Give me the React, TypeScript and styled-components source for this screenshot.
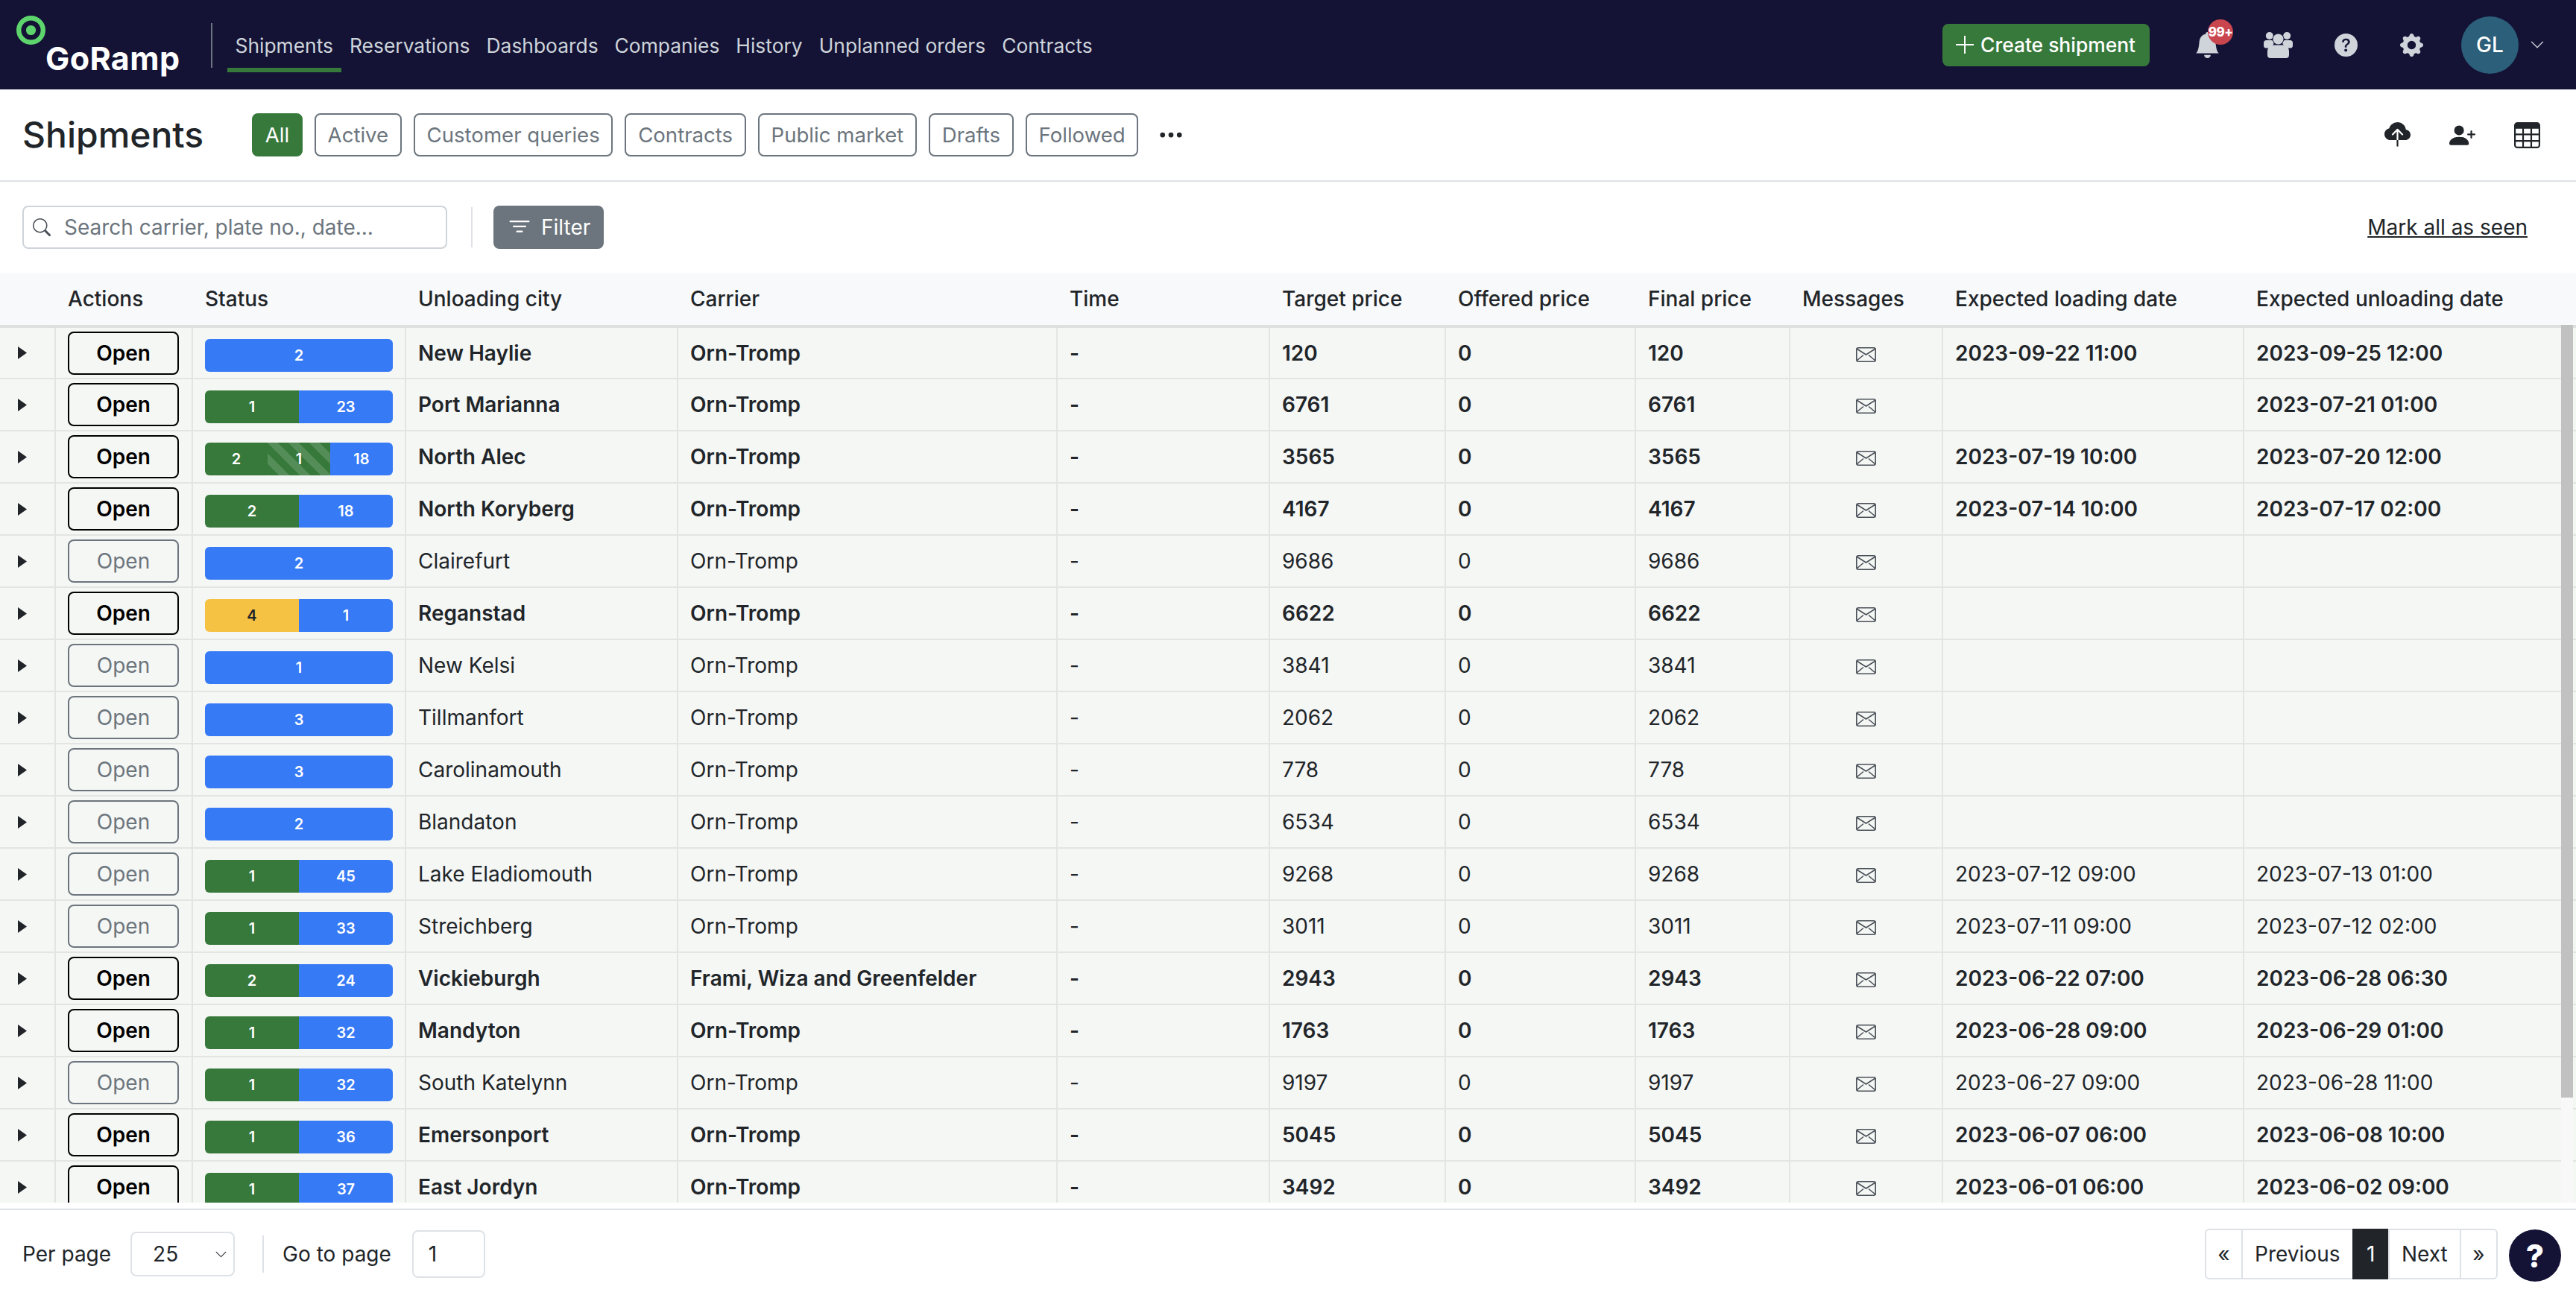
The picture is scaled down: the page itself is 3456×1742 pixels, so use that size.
import React from "react";
import styled, { createGlobalStyle } from "styled-components";
import {
  BsBellFill,
  BsChevronDown,
  BsCloudUploadFill,
  BsFilter,
  BsGearFill,
  BsPersonPlusFill,
  BsQuestionCircleFill,
  BsSearch,
  BsTable,
  BsThreeDots
} from "react-icons/bs";

type Segment = { kind: "green" | "striped" | "blue" | "yellow"; value: number };
type Shipment = {
  city: string;
  carrier?: string;
  unread: boolean;
  status: Segment[];
  target: number;
  loading?: string;
  unloading?: string;
};

const green = (value: number): Segment => ({ kind: "green", value });
const blue = (value: number): Segment => ({ kind: "blue", value });
const striped = (value: number): Segment => ({ kind: "striped", value });
const yellow = (value: number): Segment => ({ kind: "yellow", value });

const shipments: Shipment[] = [
  { city: "New Haylie", unread: true, status: [blue(2)], target: 120, loading: "2023-09-22 11:00", unloading: "2023-09-25 12:00" },
  { city: "Port Marianna", unread: true, status: [green(1), blue(23)], target: 6761, unloading: "2023-07-21 01:00" },
  { city: "North Alec", unread: true, status: [green(2), striped(1), blue(18)], target: 3565, loading: "2023-07-19 10:00", unloading: "2023-07-20 12:00" },
  { city: "North Koryberg", unread: true, status: [green(2), blue(18)], target: 4167, loading: "2023-07-14 10:00", unloading: "2023-07-17 02:00" },
  { city: "Clairefurt", unread: false, status: [blue(2)], target: 9686 },
  { city: "Reganstad", unread: true, status: [yellow(4), blue(1)], target: 6622 },
  { city: "New Kelsi", unread: false, status: [blue(1)], target: 3841 },
  { city: "Tillmanfort", unread: false, status: [blue(3)], target: 2062 },
  { city: "Carolinamouth", unread: false, status: [blue(3)], target: 778 },
  { city: "Blandaton", unread: false, status: [blue(2)], target: 6534 },
  { city: "Lake Eladiomouth", unread: false, status: [green(1), blue(45)], target: 9268, loading: "2023-07-12 09:00", unloading: "2023-07-13 01:00" },
  { city: "Streichberg", unread: false, status: [green(1), blue(33)], target: 3011, loading: "2023-07-11 09:00", unloading: "2023-07-12 02:00" },
  { city: "Vickieburgh", carrier: "Frami, Wiza and Greenfelder", unread: true, status: [green(2), blue(24)], target: 2943, loading: "2023-06-22 07:00", unloading: "2023-06-28 06:30" },
  { city: "Mandyton", unread: true, status: [green(1), blue(32)], target: 1763, loading: "2023-06-28 09:00", unloading: "2023-06-29 01:00" },
  { city: "South Katelynn", unread: false, status: [green(1), blue(32)], target: 9197, loading: "2023-06-27 09:00", unloading: "2023-06-28 11:00" },
  { city: "Emersonport", unread: true, status: [green(1), blue(36)], target: 5045, loading: "2023-06-07 06:00", unloading: "2023-06-08 10:00" },
  { city: "East Jordyn", unread: true, status: [green(1), blue(37)], target: 3492, loading: "2023-06-01 06:00", unloading: "2023-06-02 09:00" }
];

const navLinks = ["Shipments", "Reservations", "Dashboards", "Companies", "History", "Unplanned orders", "Contracts"];
const tabs = ["All", "Active", "Customer queries", "Contracts", "Public market", "Drafts", "Followed"];
const columns = ["", "Actions", "Status", "Unloading city", "Carrier", "Time", "Target price", "Offered price", "Final price", "Messages", "Expected loading date", "Expected unloading date"];
const columnWidths = [75, 184, 286, 365, 509, 285, 236, 255, 207, 205, 404, 445];

const App: React.FC = () => {
  return (
    <Page>
      <GlobalStyle />
      <NavBar>
        <LogoBox>
          <LogoRing viewBox="0 0 39 39">
            <circle cx="19.5" cy="19.5" r="16.3" fill="none" stroke="#5dd56c" strokeWidth="6.4" />
            <circle cx="19.5" cy="19.5" r="6.6" fill="#5dd56c" />
          </LogoRing>
          <LogoText>GoRamp</LogoText>
        </LogoBox>
        <NavLinks>
          {navLinks.map((link, i) => (
            <NavLink key={link} $active={i === 0}>
              {link}
            </NavLink>
          ))}
        </NavLinks>
        <NavRight>
          <CreateButton>
            <PlusIcon viewBox="0 0 24 24">
              <path d="M12 0v24M0 12h24" fill="none" stroke="#fff" strokeWidth="2" />
            </PlusIcon>
            Create shipment
          </CreateButton>
          <BellBox>
            <BsBellFill size={35} />
            <Badge>99+</Badge>
          </BellBox>
          <TeamIcon viewBox="0 0 39 36">
            <circle cx="7.8" cy="6" r="5" fill="#ced4da" />
            <circle cx="31.2" cy="6" r="5" fill="#ced4da" />
            <path d="M0 15.5c0-2 1.5-3.5 3.5-3.5h7c1.8 0 3 2 3 4 0 3-3.5 3-5.5 6.5H3c-2 0-3-1.5-3-3.5z" fill="#ced4da" />
            <path d="M39 15.5c0-2-1.5-3.5-3.5-3.5h-7c-1.8 0-3 2-3 4 0 3 3.5 3 5.5 6.5h5c2 0 3-1.5 3-3.5z" fill="#ced4da" />
            <circle cx="19.5" cy="10.5" r="7.8" fill="#141336" />
            <circle cx="19.5" cy="10.5" r="7" fill="#ced4da" />
            <path d="M5 27c0-5 3.5-8.5 8-8.5h13c4.5 0 8 3.5 8 8.5v5c0 2.500-1.500 4-4 4H9c-2.500 0-4-1.500-4-4z" fill="#ced4da" />
          </TeamIcon>
          <HelpIcon>
            <BsQuestionCircleFill size={31} />
          </HelpIcon>
          <GearIcon>
            <BsGearFill size={31} />
          </GearIcon>
          <Avatar>GL</Avatar>
          <AvatarChevron>
            <BsChevronDown size={20} />
          </AvatarChevron>
        </NavRight>
      </NavBar>

      <PageHeader>
        <Title>Shipments</Title>
        <Tabs>
          {tabs.map((tab, i) => (
            <Tab key={tab} $active={i === 0}>
              {tab}
            </Tab>
          ))}
          <MoreButton>
            <BsThreeDots size={36} />
          </MoreButton>
        </Tabs>
        <HeaderIcons>
          <BsCloudUploadFill size={35} />
          <BsPersonPlusFill size={35} />
          <BsTable size={35} />
        </HeaderIcons>
      </PageHeader>

      <FilterBar>
        <SearchBox>
          <BsSearch size={24} />
          <SearchInput placeholder="Search carrier, plate no., date..." />
        </SearchBox>
        <FilterDivider />
        <FilterButton>
          <BsFilter size={36} />
          Filter
        </FilterButton>
        <MarkSeen>Mark all as seen</MarkSeen>
      </FilterBar>

      <TableArea>
        <Table>
          <colgroup>
            {columnWidths.map((width, i) => (
              <col key={i} style={{ width }} />
            ))}
          </colgroup>
          <thead>
            <tr>
              {columns.map((name, i) => (
                <HeadCell key={i}>{name}</HeadCell>
              ))}
            </tr>
          </thead>
          <tbody>
            {shipments.map(shipment => (
              <Row key={shipment.city} $bold={shipment.unread}>
                <Cell>
                  <Caret viewBox="0 0 12 17">
                    <path d="M0 0l12 8.500L0 17z" fill="#212529" />
                  </Caret>
                </Cell>
                <Cell>
                  <OpenButton $bold={shipment.unread}>Open</OpenButton>
                </Cell>
                <Cell>
                  <StatusBar>
                    {shipment.status.map((segment, i) => (
                      <StatusSegment key={i} $kind={segment.kind}>
                        {segment.value}
                      </StatusSegment>
                    ))}
                  </StatusBar>
                </Cell>
                <Cell>{shipment.city}</Cell>
                <Cell>{shipment.carrier || "Orn-Tromp"}</Cell>
                <Cell>-</Cell>
                <Cell>{shipment.target}</Cell>
                <Cell>0</Cell>
                <Cell>{shipment.target}</Cell>
                <MessageCell>
                  <MessageIcon viewBox="0 0 27 20">
                    <rect x="0.8" y="0.8" width="25.400" height="18.400" rx="2.500" fill="none" stroke="#495057" strokeWidth="1.600" />
                    <path d="M1 2l12.500 8L26 2M1 18l9-7.500M26 18l-9-7.500" fill="none" stroke="#495057" strokeWidth="1.600" />
                  </MessageIcon>
                </MessageCell>
                <Cell>{shipment.loading}</Cell>
                <Cell>{shipment.unloading}</Cell>
              </Row>
            ))}
          </tbody>
        </Table>
        <ScrollTrack>
          <ScrollThumb />
        </ScrollTrack>
      </TableArea>

      <Footer>
        <FooterLabel>Per page</FooterLabel>
        <PerPage>
          25
          <BsChevronDown size={17} />
        </PerPage>
        <FooterDivider />
        <FooterLabel>Go to page</FooterLabel>
        <PageInput defaultValue="1" />
        <Pagination>
          <PageCell>«</PageCell>
          <PageCell>Previous</PageCell>
          <PageCell $current>1</PageCell>
          <PageCell>Next</PageCell>
          <PageCell>»</PageCell>
        </Pagination>
        <HelpFab>?</HelpFab>
      </Footer>
    </Page>
  );
};

const GlobalStyle = createGlobalStyle`
  * {
    box-sizing: border-box;
  }
  body {
    margin: 0;
    background: #fff;
    color: #212529;
    font-family: Inter, "Liberation Sans", sans-serif;
    font-size: 28px;
  }
`;

const Page = styled.div`
  display: flex;
  flex-direction: column;
  height: 100vh;
  overflow: hidden;
`;

const NavBar = styled.header`
  display: flex;
  flex: none;
  height: 120px;
  background: #141336;
  color: #ced4da;
`;

const LogoBox = styled.div`
  display: flex;
  align-items: flex-start;
  width: 283px;
  padding: 21px 0 0 22px;
`;

const LogoRing = styled.svg`
  flex: none;
  width: 39px;
  height: 39px;
`;

const LogoText = styled.span`
  margin-top: 33px;
  font-size: 43px;
  line-height: 48px;
  font-weight: 700;
  letter-spacing: 0.4px;
  color: #fff;
`;

const NavLinks = styled.nav`
  display: flex;
  height: 60px;
  margin-top: 31px;
  padding-left: 19.5px;
  border-left: 2px solid #6c757d;
`;

const NavLink = styled.a<{ $active?: boolean }>`
  display: block;
  height: 66px;
  padding: 0 11px;
  font-size: 26.4px;
  line-height: 60px;
  white-space: nowrap;
  border-bottom: 6px solid ${props => (props.$active ? "#37793b" : "transparent")};
`;

const NavRight = styled.div`
  display: flex;
  align-items: center;
  margin-left: auto;
  height: 120px;
`;

const CreateButton = styled.button`
  display: flex;
  align-items: center;
  gap: 9px;
  height: 57px;
  padding: 0 19px 0 18px;
  border: 0;
  border-radius: 8px;
  background: #37793b;
  color: #fff;
  font: 500 26.4px Inter, sans-serif;
  white-space: nowrap;
`;

const PlusIcon = styled.svg`
  flex: none;
  width: 24px;
  height: 24px;
`;

const BellBox = styled.div`
  position: relative;
  display: flex;
  margin-left: 60px;
  width: 35px;
  color: #ced4da;
`;

const Badge = styled.span`
  position: absolute;
  top: -17px;
  left: 18px;
  display: flex;
  align-items: center;
  justify-content: center;
  width: 34px;
  height: 34px;
  border-radius: 50%;
  background: #ca464f;
  color: #fff;
  font-size: 17px;
  font-weight: 800;
  letter-spacing: -0.5px;
`;

const TeamIcon = styled.svg`
  width: 39px;
  height: 36px;
  margin-left: 58px;
`;

const HelpIcon = styled.span`
  display: flex;
  margin-left: 56px;
  color: #ced4da;
`;

const GearIcon = styled.span`
  display: flex;
  margin-left: 57px;
  color: #ced4da;
`;

const Avatar = styled.div`
  display: flex;
  align-items: center;
  justify-content: center;
  width: 77px;
  height: 77px;
  margin-left: 51px;
  border-radius: 50%;
  background: #2c5f7a;
  color: #fff;
  font-weight: 500;
`;

const AvatarChevron = styled.span`
  display: flex;
  margin: 0 42px 0 15px;
  color: #ced4da;
`;

const PageHeader = styled.div`
  display: flex;
  flex: none;
  align-items: center;
  height: 124px;
  padding: 0 48px 0 30px;
  border-bottom: 2px solid #dee2e6;
`;

const Title = styled.h1`
  margin: 0 65px 0 0;
  font-size: 48px;
  font-weight: 500;
  line-height: 1.2;
`;

const Tabs = styled.div`
  display: flex;
  align-items: center;
  gap: 16px;
`;

const Tab = styled.button<{ $active?: boolean }>`
  height: 58px;
  padding: 0 15.7px;
  border: 2px solid ${props => (props.$active ? "#37793b" : "#6c757d")};
  border-radius: 8px;
  background: ${props => (props.$active ? "#37793b" : "#fff")};
  color: ${props => (props.$active ? "#fff" : "#6c757d")};
  font: 400 27.6px Inter, sans-serif;
  white-space: nowrap;
`;

const MoreButton = styled.span`
  display: flex;
  margin-left: 10px;
  color: #212529;
`;

const HeaderIcons = styled.div`
  display: flex;
  align-items: center;
  gap: 52px;
  margin-left: auto;
  color: #212529;
`;

const FilterBar = styled.div`
  display: flex;
  flex: none;
  align-items: center;
  height: 122px;
  padding: 0 65px 0 30px;
`;

const SearchBox = styled.div`
  display: flex;
  align-items: center;
  gap: 18px;
  width: 570px;
  height: 58px;
  padding: 0 12px;
  border: 2px solid #ced4da;
  border-radius: 8px;
  color: #495057;
`;

const SearchInput = styled.input`
  flex: 1;
  min-width: 0;
  padding: 0;
  border: 0;
  outline: 0;
  font: 400 28px Inter, sans-serif;
  &::placeholder {
    color: #6c757d;
    opacity: 1;
  }
`;

const FilterDivider = styled.div`
  width: 2px;
  height: 54px;
  margin: 0 28px 0 32px;
  background: #dee2e6;
`;

const FilterButton = styled.button`
  display: flex;
  align-items: center;
  gap: 11px;
  height: 58px;
  padding: 0 18px 0 17px;
  border: 0;
  border-radius: 8px;
  background: #6c757d;
  color: #fff;
  font: 400 28px Inter, sans-serif;
`;

const MarkSeen = styled.a`
  margin-left: auto;
  text-decoration: underline;
  text-underline-offset: 2px;
`;

const TableArea = styled.div`
  position: relative;
  flex: none;
  height: 1248px;
  overflow: hidden;
`;

const Table = styled.table`
  width: 3456px;
  border-collapse: separate;
  border-spacing: 0;
  table-layout: fixed;
`;

const HeadCell = styled.th`
  height: 74px;
  padding: 0 0 0 16px;
  background: #f8f9fa;
  border-bottom: 4px solid #dedfdf;
  font-weight: 500;
  text-align: left;
  white-space: nowrap;
`;

const Cell = styled.td`
  padding: 0 0 0 16px;
  border-right: 2px solid #e3e5e3;
  border-bottom: 2px solid #e3e5e3;
  white-space: nowrap;
  &:last-child {
    border-right: 0;
  }
`;

const Row = styled.tr<{ $bold: boolean }>`
  height: 70px;
  background: #f5f7f5;
  font-weight: ${props => (props.$bold ? 600 : 400)};
  &:first-child {
    height: 69px;
  }
`;

const MessageCell = styled(Cell)`
  padding: 0;
  text-align: center;
`;

const Caret = styled.svg`
  display: block;
  width: 12px;
  height: 17px;
  margin-left: 8px;
`;

const OpenButton = styled.button<{ $bold: boolean }>`
  display: block;
  width: 149px;
  height: 58px;
  padding: 0;
  border: 2px solid ${props => (props.$bold ? "#000" : "#6c757d")};
  border-radius: 8px;
  background: transparent;
  color: ${props => (props.$bold ? "#000" : "#6c757d")};
  font: ${props => (props.$bold ? 600 : 400)} 28px Inter, sans-serif;
`;

const StatusBar = styled.div`
  display: flex;
  width: 252px;
  height: 44px;
  margin-top: 6px;
  border-radius: 6px;
  overflow: hidden;
`;

const segmentBackgrounds = {
  green: "#37793b",
  blue: "#377af6",
  yellow: "#f6c244",
  striped:
    "linear-gradient(45deg, rgba(255,255,255,.15) 25%, transparent 25%, transparent 50%, rgba(255,255,255,.15) 50%, rgba(255,255,255,.15) 75%, transparent 75%, transparent) 0 0 / 28px 28px, #37793b"
};

const StatusSegment = styled.div<{ $kind: Segment["kind"] }>`
  display: flex;
  flex: 1;
  align-items: center;
  justify-content: center;
  background: ${props => segmentBackgrounds[props.$kind]};
  color: ${props => (props.$kind === "yellow" ? "#212529" : "#fff")};
  font-size: 20px;
  font-weight: 600;
`;

const MessageIcon = styled.svg`
  display: block;
  width: 27px;
  height: 20px;
  margin: 4px auto 0;
`;

const ScrollTrack = styled.div`
  position: absolute;
  top: 70px;
  right: 4px;
  bottom: 0;
  width: 16px;
  background: #f8f8f8;
`;

const ScrollThumb = styled.div`
  height: 1037px;
  background: #c1c1c1;
`;

const Footer = styled.footer`
  display: flex;
  flex: none;
  align-items: center;
  height: 120px;
  margin-top: 8px;
  padding: 0 20px 0 30px;
  border-top: 2px solid #dee2e6;
`;

const FooterLabel = styled.span`
  white-space: nowrap;
`;

const PerPage = styled.div`
  display: flex;
  align-items: center;
  justify-content: space-between;
  width: 140px;
  height: 60px;
  margin-left: 26px;
  padding: 0 8px 0 28px;
  border: 2px solid #dee2e6;
  border-radius: 8px;
`;

const FooterDivider = styled.div`
  width: 2px;
  height: 50px;
  margin: 0 25px 0 37px;
  background: #dee2e6;
`;

const PageInput = styled.input`
  width: 98px;
  height: 64px;
  margin-left: 28px;
  padding: 0 20px;
  border: 2px solid #dee2e6;
  border-radius: 8px;
  font: 400 28px Inter, sans-serif;
  color: #212529;
`;

const Pagination = styled.div`
  display: flex;
  height: 68px;
  margin-left: auto;
`;

const PageCell = styled.span<{ $current?: boolean }>`
  display: flex;
  align-items: center;
  padding: 0 ${props => (props.$current ? 17.5 : 16)}px;
  border: solid #dee2e6;
  border-width: 2px 0 2px 2px;
  background: ${props => (props.$current ? "#212529" : "#fff")};
  border-color: ${props => (props.$current ? "#212529" : "#dee2e6")};
  color: ${props => (props.$current ? "#fff" : "#212529")};
  &:first-child {
    padding: 0 15.5px;
    border-radius: 6px 0 0 6px;
  }
  &:last-child {
    padding: 0 15.5px;
    border-right-width: 2px;
    border-radius: 0 6px 6px 0;
  }
`;

const HelpFab = styled.div`
  display: flex;
  align-items: center;
  justify-content: center;
  width: 70px;
  height: 70px;
  margin: 4px 0 0 15px;
  border-radius: 50%;
  background: #141336;
  color: #fff;
  font-size: 42px;
  font-weight: 800;
`;

export default App;
